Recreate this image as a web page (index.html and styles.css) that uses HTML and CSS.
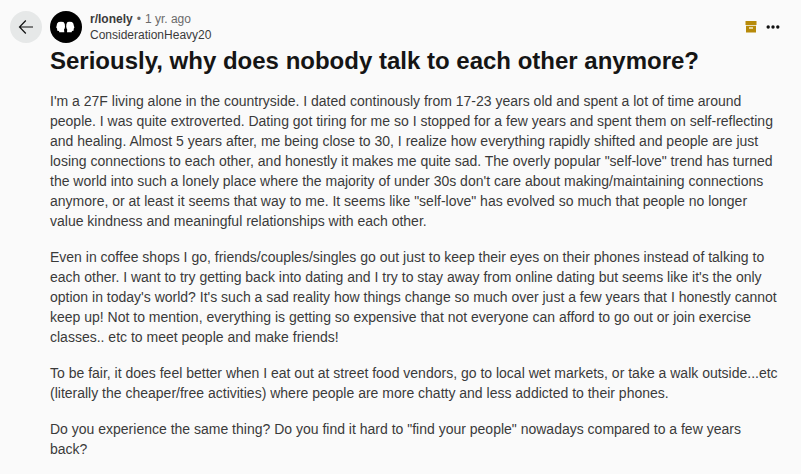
FILE: index.html
```html
<!DOCTYPE html>
<html lang="en">
<head>
<meta charset="utf-8">
<meta name="viewport" content="width=device-width, initial-scale=1">
<title>Seriously, why does nobody talk to each other anymore?</title>
<link rel="stylesheet" href="styles.css">
</head>
<body>
<main class="page">
  <button class="back" type="button" aria-label="Back">
    <svg width="20" height="20" viewBox="0 0 20 20" fill="none" stroke="currentColor" stroke-width="1.2"><path d="M17 10H3.700M9.800 3.500L3.500 10l6.300 6.500"/></svg>
  </button>
  <article class="post">
    <header class="bar">
      <svg class="avatar" width="32" height="32" viewBox="0 0 32 32" aria-hidden="true">
        <circle cx="16" cy="16" r="16" fill="#000"/>
        <path fill="#fff" d="M8.500 11Q11 10.300 13.500 11Q15.300 12.500 15 15.500Q15 17.500 14 18.500L14.300 21.300H9.300L9 20L7.300 19.800L7 17.500L6.200 16.500L6.700 14.500Q6.600 12 8.500 11ZM22 11Q19.500 10.300 17.500 11Q16 12.500 16.200 15.500Q16.300 17.500 17.200 18.500L17 21.300H21.600L22 20L23.500 19.800L23.800 17.500L24.400 16.500L23.800 14.500Q23.800 12 22 11Z"/>
      </svg>
      <div class="credit">
        <div class="line"><a class="community" href="#">r/lonely</a><span class="dot">•</span><time class="age">1 yr. ago</time></div>
        <a class="author" href="#">ConsiderationHeavy20</a>
      </div>
      <div class="actions">
        <svg class="archive" width="16" height="16" viewBox="0 0 16 16" role="img" aria-label="Archived"><path fill="currentColor" d="M2.500 2h11v4h-11zM3 6.700h10V13.500H3z"/><path fill="#e6d49b" d="M6 8h4v2H6z"/></svg>
        <button class="more" type="button" aria-label="More options">
          <svg width="16" height="16" viewBox="0 0 16 16" fill="currentColor"><circle cx="3.200" cy="8" r="1.700"/><circle cx="8" cy="8" r="1.700"/><circle cx="12.800" cy="8" r="1.700"/></svg>
        </button>
      </div>
    </header>
    <h1 class="title">Seriously, why does nobody talk to each other anymore?</h1>
    <div class="body">
      <p>I'm a 27F living alone in the countryside. I dated continously from 17-23 years old and spent a lot of time around people. I was quite extroverted. Dating got tiring for me so I stopped for a few years and spent them on self-reflecting and healing. Almost 5 years after, me being close to 30, I realize how everything rapidly shifted and people are just losing connections to each other, and honestly it makes me quite sad. The overly popular "self-love" trend has turned the world into such a lonely place where the majority of under 30s don't care about making/maintaining connections anymore, or at least it seems that way to me. It seems like "self-love" has evolved so much that people no longer value kindness and meaningful relationships with each other.</p>
      <p>Even in coffee shops I go, friends/couples/singles go out just to keep their eyes on their phones instead of talking to each other. I want to try getting back into dating and I try to stay away from online dating but seems like it's the only option in today's world? It's such a sad reality how things change so much over just a few years that I honestly cannot keep up! Not to mention, everything is getting so expensive that not everyone can afford to go out or join exercise classes.. etc to meet people and make friends!</p>
      <p>To be fair, it does feel better when I eat out at street food vendors, go to local wet markets, or take a walk outside...etc (literally the cheaper/free activities) where people are more chatty and less addicted to their phones.</p>
      <p>Do you experience the same thing? Do you find it hard to "find your people" nowadays compared to a few years back?</p>
    </div>
  </article>
</main>
</body>
</html>
```

FILE: styles.css
```css
* {
  box-sizing: border-box;
}

body {
  margin: 0;
  background: #fafafa;
  color: #3a3a3a;
  font-family: "Liberation Sans", Arial, sans-serif;
}

a {
  color: inherit;
  text-decoration: none;
}

button {
  display: flex;
  align-items: center;
  justify-content: center;
  padding: 0;
  border: 0;
  border-radius: 50%;
  background: none;
  color: #111;
}

svg {
  display: block;
  flex: none;
}

.page {
  display: flex;
  gap: 8px;
  padding: 11px 20px 0 10px;
}

.back {
  flex: none;
  width: 32px;
  height: 32px;
  background: #e6e8e8;
}

.post {
  flex: 1;
  min-width: 0;
}

.bar {
  display: flex;
  align-items: center;
  gap: 8px;
}

.credit {
  flex: 1;
  font-size: 12px;
  line-height: 16px;
}

.line {
  display: flex;
  gap: 4px;
}

.community {
  font-weight: 700;
}

.dot,
.age {
  color: #6a6a6a;
}

.author {
  display: block;
}

.actions {
  display: flex;
  align-items: center;
  gap: 6px;
}

.archive {
  color: #b78a0a;
}

.title {
  margin: 2px 0 0;
  color: #151515;
  font-size: 24px;
  line-height: 32px;
}

.body {
  margin-top: 14px;
  font-size: 14px;
  line-height: 20px;
}

.body p {
  margin: 0 0 16px;
}

.body p:last-child {
  margin-bottom: 0;
}
```
